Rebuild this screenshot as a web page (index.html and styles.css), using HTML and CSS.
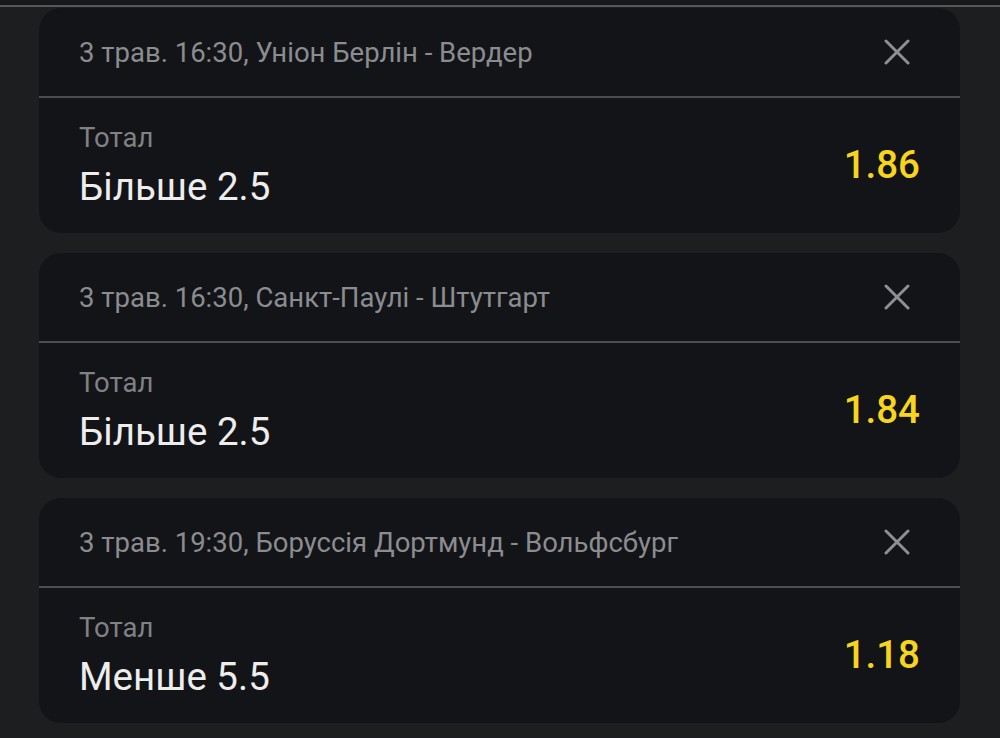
FILE: index.html
```html
<!DOCTYPE html>
<html lang="uk">
<head>
  <meta charset="UTF-8">
  <meta name="viewport" content="width=device-width, initial-scale=1.0">
  <title>Купон</title>
  <link rel="stylesheet" href="styles.css">
</head>
<body>
  <div class="topbar"></div>

  <div class="coupon">
    <!-- Bet 1 -->
    <div class="bet">
      <div class="bet-head">
        <span class="event">3 трав. 16:30, Уніон Берлін - Вердер</span>
        <svg class="close" viewBox="0 0 26 26"><path d="M2 2L24 24M24 2L2 24"/></svg>
      </div>
      <div class="bet-body">
        <div class="market">
          <div class="market-name">Тотал</div>
          <div class="outcome">Більше 2.5</div>
        </div>
        <div class="odds">1.86</div>
      </div>
    </div>

    <!-- Bet 2 -->
    <div class="bet">
      <div class="bet-head">
        <span class="event">3 трав. 16:30, Санкт-Паулі - Штутгарт</span>
        <svg class="close" viewBox="0 0 26 26"><path d="M2 2L24 24M24 2L2 24"/></svg>
      </div>
      <div class="bet-body">
        <div class="market">
          <div class="market-name">Тотал</div>
          <div class="outcome">Більше 2.5</div>
        </div>
        <div class="odds">1.84</div>
      </div>
    </div>

    <!-- Bet 3 -->
    <div class="bet">
      <div class="bet-head">
        <span class="event">3 трав. 19:30, Боруссія Дортмунд - Вольфсбург</span>
        <svg class="close" viewBox="0 0 26 26"><path d="M2 2L24 24M24 2L2 24"/></svg>
      </div>
      <div class="bet-body">
        <div class="market">
          <div class="market-name">Тотал</div>
          <div class="outcome">Менше 5.5</div>
        </div>
        <div class="odds">1.18</div>
      </div>
    </div>
  </div>
</body>
</html>
```

FILE: styles.css
```css
body {
  font-family: Roboto, "Noto Sans", sans-serif;
  background-color: #1d1e20;
  margin: 0;
  padding: 0;
}
.topbar {
  height: 5px;
  background-color: #17181a;
  border-bottom: 2px solid #55565a;
}
.coupon {
  display: flex;
  flex-direction: column;
  gap: 20px;
  padding: 1px 40px 0 39px;
}
.bet {
  background-color: #131417;
  border-radius: 22px;
}
.bet-head {
  height: 88px;
  display: flex;
  align-items: center;
  justify-content: space-between;
  padding: 0 50px 0 40px;
  border-bottom: 2px solid #4c4d50;
}
.event {
  font-size: 27.5px;
  color: #8b8c90;
}
.close {
  width: 26px;
  height: 26px;
  fill: none;
  stroke: #8e8f94;
  stroke-width: 3;
  stroke-linecap: round;
}
.bet-body {
  height: 135px;
  box-sizing: border-box;
  display: flex;
  align-items: center;
  justify-content: space-between;
  padding: 3px 40px 0 40px;
}
.market-name {
  font-size: 27.5px;
  line-height: 40px;
  color: #808185;
}
.outcome {
  font-size: 38.5px;
  line-height: 58px;
  color: #ededee;
}
.odds {
  font-size: 38.5px;
  font-weight: 500;
  color: #f7d51d;
  margin-bottom: 6px;
}
```
